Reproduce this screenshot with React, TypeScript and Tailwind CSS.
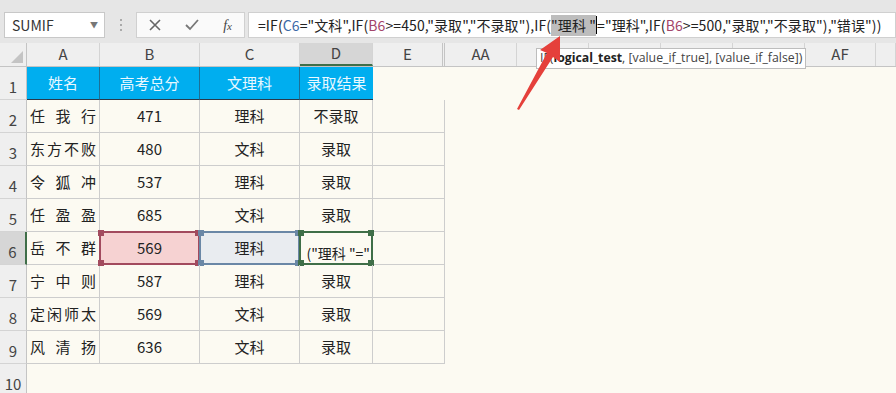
import React from 'react'

const cols = ['A', 'B', 'C', 'D', 'E', 'AA', '', '', '', '', 'AF', '']
const widths = ['w-[73px]', 'w-[100px]', 'w-[100px]', 'w-[73px]', 'w-[72px]', 'w-[72px]', 'w-[72px]', 'w-[72px]', 'w-[72px]', 'w-[72px]', 'w-[71px]', 'flex-1']

const rows = [
  { name: '任我行', score: '471', subj: '理科', res: '不录取' },
  { name: '东方不败', score: '480', subj: '文科', res: '录取' },
  { name: '令狐冲', score: '537', subj: '理科', res: '录取' },
  { name: '任盈盈', score: '685', subj: '文科', res: '录取' },
  { name: '岳不群', score: '569', subj: '理科', res: '' },
  { name: '宁中则', score: '587', subj: '理科', res: '录取' },
  { name: '定闲师太', score: '569', subj: '文科', res: '录取' },
  { name: '风清扬', score: '636', subj: '文科', res: '录取' },
]

const font = { fontFamily: '"Noto Sans CJK SC", "Noto Sans", sans-serif' }

function Handles({ color }: { color: string }) {
  return (
    <>
      <span className={`absolute -left-[3px] -top-[3px] h-[6px] w-[6px] ${color}`} />
      <span className={`absolute -right-[3px] -top-[3px] h-[6px] w-[6px] ${color}`} />
      <span className={`absolute -left-[3px] -bottom-[3px] h-[6px] w-[6px] ${color}`} />
      <span className={`absolute -right-[3px] -bottom-[3px] h-[6px] w-[6px] ${color}`} />
    </>
  )
}

function RowHeader({ n, active }: { n: number; active?: boolean }) {
  return (
    <div
      className={`flex w-[27px] shrink-0 items-end justify-center border-b border-[#d4d4d4] pb-[1px] text-[15px] text-[#444] ${
        active ? 'border-r-2 border-r-[#3f6e48] bg-[#d6d6d6]' : 'border-r border-r-[#c4c4c4] bg-[#efefef]'
      }`}
    >
      {n}
    </div>
  )
}

export default function App() {
  return (
    <div className="relative h-[393px] w-[896px] overflow-hidden bg-[#fcfaf2] text-[#222]" style={font}>
      {/* formula bar */}
      <div className="flex h-[43px] items-start bg-[#e6e6e6] pt-[12px]">
        <div className="ml-[4px] flex h-[26px] w-[101px] items-center justify-between border border-[#c8c8c8] bg-white pl-[7px] pr-[6px] text-[14px] text-[#333]">
          <span>SUMIF</span>
          <span className="text-[8px] text-[#777]">▼</span>
        </div>
        <div className="flex h-[26px] w-[31px] flex-col items-center justify-center gap-[3px]">
          <span className="h-[2px] w-[2px] bg-[#aaa]" />
          <span className="h-[2px] w-[2px] bg-[#aaa]" />
          <span className="h-[2px] w-[2px] bg-[#aaa]" />
        </div>
        <div className="flex h-[26px] w-[109px] items-center justify-around border border-[#d0d0d0] bg-[#fafafa] text-[#555]">
          <svg width="12" height="12" viewBox="0 0 12 12"><path d="M1 1L11 11M11 1L1 11" stroke="#666" strokeWidth="1.6" /></svg>
          <svg width="14" height="12" viewBox="0 0 14 12"><path d="M1 6L5 10L13 1" stroke="#777" strokeWidth="1.8" fill="none" /></svg>
          <span className="text-[14px] italic text-[#444]" style={{ fontFamily: '"Liberation Serif", serif' }}>f<span className="text-[11px]">x</span></span>
        </div>
        <div className="ml-[3px] flex h-[26px] flex-1 items-center whitespace-nowrap border border-[#d0d0d0] bg-white pl-[9px] text-[14px] tracking-[0.1px] text-[#222]">
          <span>=IF(</span>
          <span className="text-[#3c6aa8]">C6</span>
          <span>="文科",IF(</span>
          <span className="text-[#a3456a]">B6</span>
          <span>&gt;=450,"录取","不录取"),IF(</span>
          <span className="bg-[#bdbdbd]">"理科 "</span>
          <span className="h-[18px] w-px bg-black" />
          <span>="理科",IF(</span>
          <span className="text-[#a3456a]">B6</span>
          <span>&gt;=500,"录取","不录取"),"错误"))</span>
        </div>
      </div>

      {/* column headers */}
      <div className="flex h-[24px] border-b border-[#c4c4c4] bg-[#efefef] text-[15px] text-[#444]">
        <div className="relative w-[27px] shrink-0 border-r border-[#c4c4c4]">
          <svg className="absolute bottom-[3px] right-[3px]" width="12" height="12" viewBox="0 0 12 12"><path d="M12 0V12H0Z" fill="#c4c4c4" /></svg>
        </div>
        {cols.map((c, i) => (
          <div
            key={i}
            className={`flex shrink-0 items-center justify-center ${widths[i]} ${
              c === 'D' ? 'border-b-2 border-b-[#3f6e48] bg-[#d6d6d6]' : ''
            } ${c === 'E' ? 'border-r-[3px] border-double border-r-[#c4c4c4]' : 'border-r border-r-[#d4d4d4]'}`}
          >
            {c}
          </div>
        ))}
      </div>

      {/* row 1 */}
      <div className="flex h-[33px]">
        <RowHeader n={1} />
        {['姓名', '高考总分', '文理科', '录取结果'].map((t, i) => (
          <div
            key={t}
            className={`flex shrink-0 items-center justify-center border-b border-b-[#2a3a4a] bg-[#00aeef] text-[15px] text-[#e8f8ff] ${widths[i]} ${
              i < 3 ? 'border-r border-r-[#1d6f96]' : ''
            }`}
          >
            {t}
          </div>
        ))}
      </div>

      {/* data rows */}
      {rows.map((r, i) => {
        const n = i + 2
        const active = n === 6
        return (
          <div key={n} className="flex h-[33px] text-[15px]">
            <RowHeader n={n} active={active} />
            <div className="flex w-[73px] shrink-0 items-center justify-between border-b border-r border-[#cdcdcd] px-[3px]">
              {r.name.split('').map((ch, k) => (
                <span key={k}>{ch}</span>
              ))}
            </div>
            <div className={`relative flex w-[100px] shrink-0 items-center justify-center border-b border-r border-[#cdcdcd] ${active ? 'bg-[#f6d2d2]' : ''}`}>
              {r.score}
              {active && (
                <span className="absolute -inset-px border-2 border-[#a24a5e]">
                  <Handles color="bg-[#a24a5e]" />
                </span>
              )}
            </div>
            <div className={`relative flex w-[100px] shrink-0 items-center justify-center border-b border-r border-[#cdcdcd] ${active ? 'bg-[#e9ecf0]' : ''}`}>
              {r.subj}
              {active && (
                <span className="absolute -inset-px border-2 border-[#6a87a6]">
                  <Handles color="bg-[#6a87a6]" />
                </span>
              )}
            </div>
            <div className="relative flex w-[73px] shrink-0 items-center justify-center border-b border-r border-[#cdcdcd]">
              {active ? (
                <div className="flex h-full w-full items-end justify-end whitespace-nowrap pr-[2px] text-[14px] leading-[22px]">
                  ("理科 "="
                </div>
              ) : (
                r.res
              )}
              {active && (
                <span className="absolute -inset-px border-2 border-[#3f6e48]">
                  <Handles color="bg-[#3f6e48]" />
                </span>
              )}
            </div>
            <div className="w-[72px] shrink-0 border-b border-r border-[#cdcdcd]" />
          </div>
        )
      })}

      <div className="flex h-[33px]">
        <RowHeader n={10} />
      </div>

      {/* function tooltip */}
      <div className="absolute left-[536px] top-[48px] flex h-[21px] items-center whitespace-nowrap border border-[#bdbdbd] bg-white px-[3px] text-[12.3px] text-[#444]" style={{ fontFamily: '"Open Sans", sans-serif' }}>
        IF(<b className="text-[#222]">logical_test</b>, [value_if_true], [value_if_false])
      </div>

      {/* red arrow */}
      <svg className="absolute left-0 top-0" width="896" height="393" viewBox="0 0 896 393">
        <polygon points="517,109 519,110 553,57 560,62 560,36 540,50 547,53" fill="#e5403b" />
      </svg>
    </div>
  )
}
